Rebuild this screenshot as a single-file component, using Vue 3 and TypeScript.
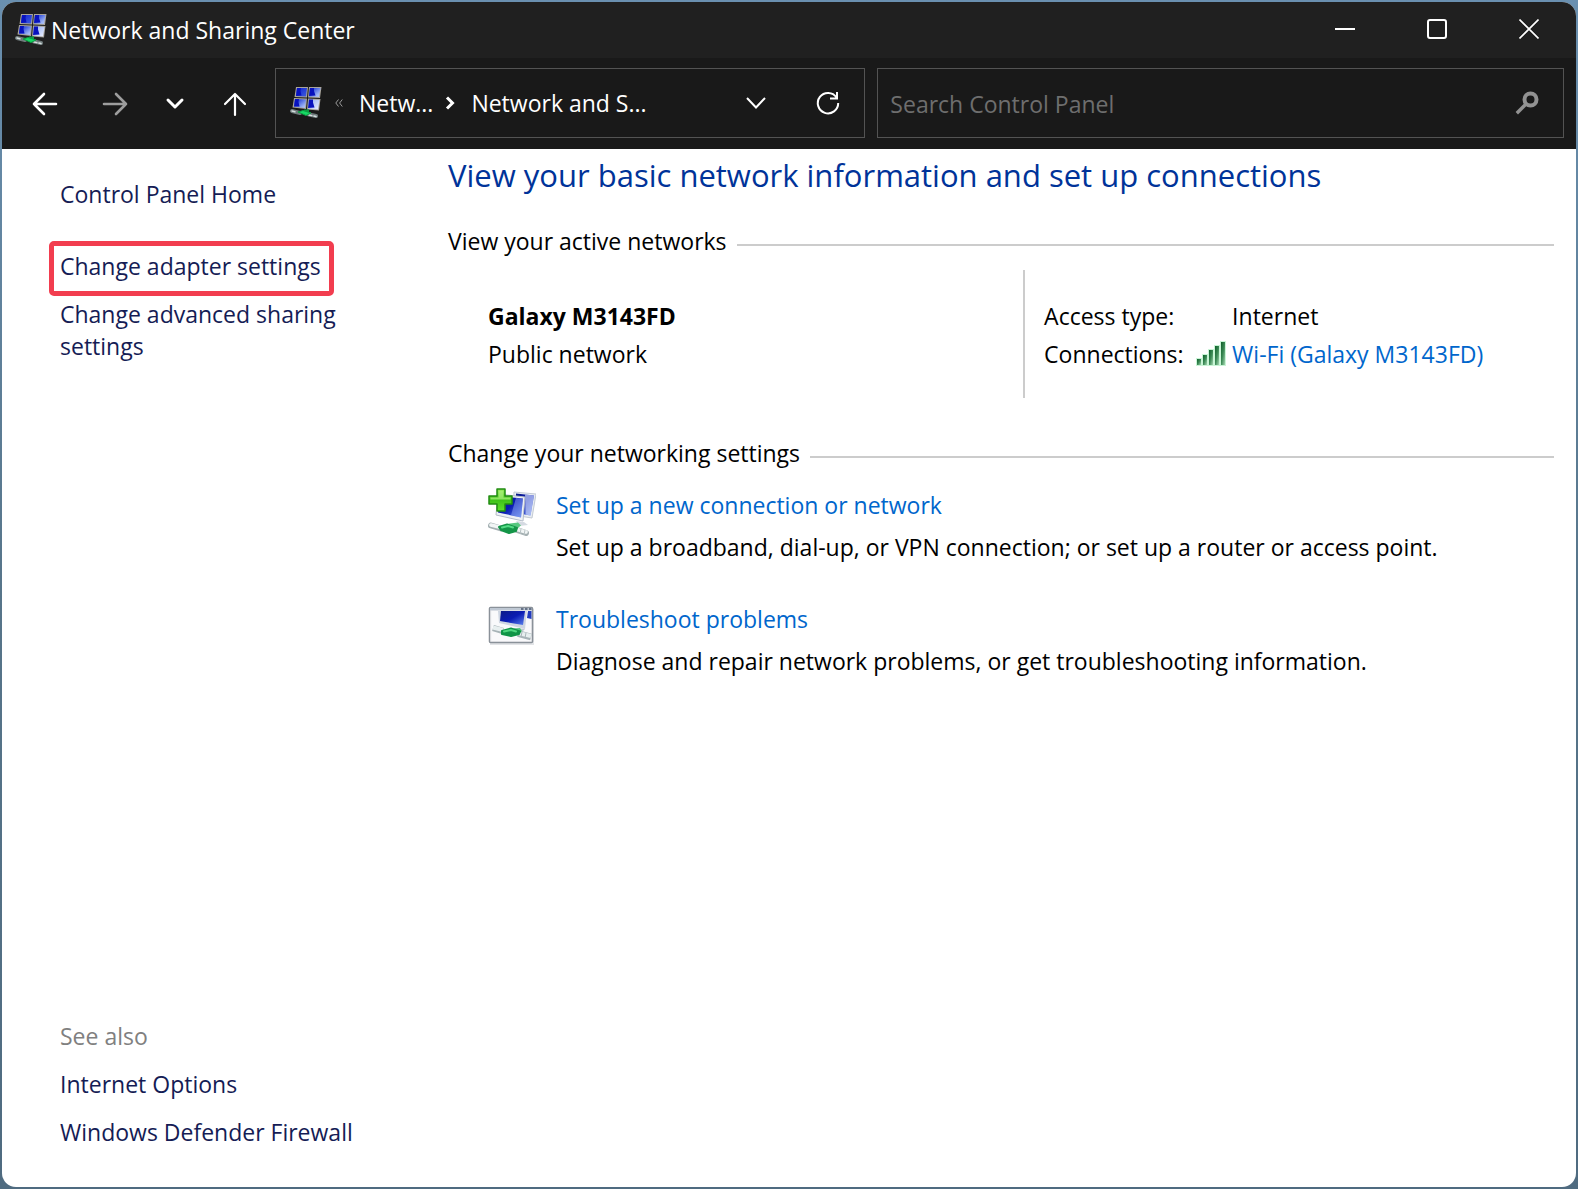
<script setup lang="ts">
import { ref } from 'vue'

interface Task {
  id: string
  title: string
  description: string
}

const search = ref('')

const tasks: Task[] = [
  {
    id: 'setup',
    title: 'Set up a new connection or network',
    description: 'Set up a broadband, dial-up, or VPN connection; or set up a router or access point.',
  },
  {
    id: 'troubleshoot',
    title: 'Troubleshoot problems',
    description: 'Diagnose and repair network problems, or get troubleshooting information.',
  },
]
</script>

<template>
  <div class="desktop">
    <svg class="defs" aria-hidden="true">
      <defs>
        <linearGradient id="screen" x1="0" y1="0" x2="1" y2="1">
          <stop offset="0" stop-color="#0a1fd0" />
          <stop offset="0.4" stop-color="#3a55dc" />
          <stop offset="0.6" stop-color="#9db4f4" />
          <stop offset="1" stop-color="#f2f6ff" />
        </linearGradient>
        <linearGradient id="deep" x1="0" y1="0" x2="1" y2="1">
          <stop offset="0" stop-color="#0c1a86" />
          <stop offset="0.5" stop-color="#0a1cb4" />
          <stop offset="1" stop-color="#5d83ee" />
        </linearGradient>
        <linearGradient id="plus" x1="0" y1="0" x2="0" y2="1">
          <stop offset="0" stop-color="#8be84a" />
          <stop offset="0.5" stop-color="#3fc21a" />
          <stop offset="1" stop-color="#5fe02c" />
        </linearGradient>
        <linearGradient id="bar" x1="0" y1="0" x2="1" y2="1">
          <stop offset="0" stop-color="#0f5f2a" />
          <stop offset="0.5" stop-color="#3b8a55" />
          <stop offset="1" stop-color="#a5d6b2" />
        </linearGradient>
        <symbol id="network" viewBox="0 0 32 32">
          <path d="M6 0h12l-1 10.500L4.500 10zM19 0h12.500l-1.500 11-12-.5zM4 11l13 .5-1 10.500L2.500 20.500zM18 11.500l12.500.5-1.500 11.500-12-1z" fill="#a9a59c" />
          <path d="M7 1h10l-1 8.500L6 9zM20 1h10.500L29 10l-10-.5zM5 12l11 .5-1 8.500-11-1.500zM19 12.500l10.500.5-1.500 9.500-10-1z" fill="url(#screen)" />
          <path d="M7 1h4l-.5 3 1 4.500L6 9zM20 1h4l0 3 1.500 4.500-6.500.5zM5 12h4l-.5 3 1 4.500L4 19.500zM19 12.500h4l0 3 1.500 5-6.500.5z" fill="#0812bd" />
          <path d="M2 24l8 2M19 27.500l7 1.500" stroke="#6f7b7c" stroke-width="4" stroke-linecap="round" />
          <path d="M2 24l4 1M19 28l7 1.500" stroke="#d5dede" stroke-width="1.500" stroke-linecap="round" stroke-dasharray="3 2" />
          <path d="M14 22.500h5v3h-5z" fill="#0c9c42" />
          <path d="M8 25l5-1.500 8 2.500-5 2.500z" fill="#16d964" stroke="#0c9c42" />
        </symbol>
      </defs>
    </svg>

    <div class="window">
      <header class="titlebar">
        <svg class="app-icon"><use href="#network" /></svg>
        <span class="title">Network and Sharing Center</span>
        <div class="controls">
          <button type="button" aria-label="Minimize">
            <svg width="20" height="20" viewBox="0 0 20 20"><path d="M0 10h20" stroke="#fff" stroke-width="2" /></svg>
          </button>
          <button type="button" aria-label="Maximize">
            <svg width="20" height="20" viewBox="0 0 20 20"><rect x="1" y="1" width="18" height="18" rx="2" fill="none" stroke="#fff" stroke-width="2" /></svg>
          </button>
          <button type="button" aria-label="Close">
            <svg width="20" height="20" viewBox="0 0 20 20"><path d="M.5.5l19 19M19.500.5l-19 19" stroke="#fff" stroke-width="1.600" /></svg>
          </button>
        </div>
      </header>

      <nav class="toolbar" aria-label="Navigation">
        <div class="nav-buttons">
          <button type="button" class="back" aria-label="Back">
            <svg width="26" height="26" viewBox="0 0 26 26"><path d="M12 3L2 13l10 10M2 13h22" fill="none" stroke="#fff" stroke-width="2.600" stroke-linecap="round" stroke-linejoin="round" /></svg>
          </button>
          <button type="button" aria-label="Forward">
            <svg width="26" height="26" viewBox="0 0 26 26"><path d="M14 3l10 10-10 10M24 13H2" fill="none" stroke="#9d9d9d" stroke-width="2.600" stroke-linecap="round" stroke-linejoin="round" /></svg>
          </button>
          <button type="button" aria-label="Recent locations">
            <svg width="26" height="26" viewBox="0 0 26 26"><path d="M6 9l7 7 7-7" fill="none" stroke="#fff" stroke-width="3" stroke-linecap="round" stroke-linejoin="round" /></svg>
          </button>
          <button type="button" aria-label="Up">
            <svg width="26" height="26" viewBox="0 0 26 26"><path d="M3 13L13 3l10 10M13 3v21" fill="none" stroke="#fff" stroke-width="2.200" stroke-linecap="round" stroke-linejoin="round" /></svg>
          </button>
        </div>

        <div class="address">
          <svg class="app-icon"><use href="#network" /></svg>
          <svg class="overflow" width="8" height="8" viewBox="0 0 8 8"><path d="M3.500.5L.8 4l2.700 3.500M7.300.5L4.600 4l2.700 3.500" fill="none" stroke="#9a9a9a" /></svg>
          <a class="crumb" href="#">Netw...</a>
          <svg class="separator" width="10" height="14" viewBox="0 0 10 14"><path d="M2 1.500L7.500 7 2 12.500" fill="none" stroke="#fff" stroke-width="3" /></svg>
          <a class="crumb" href="#">Network and S...</a>
          <button type="button" class="history" aria-label="Previous locations">
            <svg width="22" height="14" viewBox="0 0 22 14"><path d="M2 2l9 9.500L20 2" fill="none" stroke="#fff" stroke-width="2" /></svg>
          </button>
          <button type="button" class="refresh" aria-label="Refresh">
            <svg width="26" height="26" viewBox="0 0 26 26"><path d="M21.500 7.500A10.200 10.200 0 1 0 23.200 13M22 2v6.500h-7" fill="none" stroke="#fff" stroke-width="2" /></svg>
          </button>
        </div>

        <form class="search" role="search" @submit.prevent>
          <input v-model="search" type="text" placeholder="Search Control Panel" aria-label="Search Control Panel" />
          <button type="submit" aria-label="Search">
            <svg width="24" height="24" viewBox="0 0 24 24"><circle cx="15.500" cy="8.500" r="6" fill="none" stroke="#929292" stroke-width="4" /><path d="M11.500 12.500L1.800 22.200" stroke="#929292" stroke-width="3.400" /></svg>
          </button>
        </form>
      </nav>

      <div class="body">
        <aside class="sidebar">
          <nav class="side-links" aria-label="Tasks">
            <a class="home" href="#">Control Panel Home</a>
            <a class="highlighted" href="#">Change adapter settings</a>
            <a href="#">Change advanced sharing settings</a>
          </nav>
          <nav class="side-links" aria-label="See also">
            <span class="see-also">See also</span>
            <a href="#">Internet Options</a>
            <a href="#">Windows Defender Firewall</a>
          </nav>
        </aside>

        <main class="content">
          <h1>View your basic network information and set up connections</h1>

          <section>
            <h2>View your active networks</h2>
            <div class="network">
              <div class="network-name">
                <strong>Galaxy M3143FD</strong>
                <span>Public network</span>
              </div>
              <dl class="details">
                <dt>Access type:</dt>
                <dd class="plain">Internet</dd>
                <dt>Connections:</dt>
                <dd>
                  <svg class="signal" width="30" height="26" viewBox="0 0 30 26">
                    <path d="M0 17h6V25H0zM6 13h6V25H6zM12 8h6V25h-6zM18 4h6V25h-6zM24 0h6V25h-6z" fill="#c9f5d6" />
                    <g fill="url(#bar)">
                      <rect x="1" y="18" width="4" height="6" /><rect x="7" y="14" width="4" height="10" /><rect x="13" y="9" width="4" height="15" /><rect x="19" y="5" width="4" height="19" /><rect x="25" y="1" width="4" height="23" />
                    </g>
                  </svg>
                  <a href="#">Wi-Fi (Galaxy M3143FD)</a>
                </dd>
              </dl>
            </div>
          </section>

          <section>
            <h2>Change your networking settings</h2>
            <ul class="tasks">
              <li v-for="task in tasks" :key="task.id">
                <svg v-if="task.id === 'setup'" class="task-icon" viewBox="0 0 48 48">
                  <path d="M26 4l22 2-4 24-19-3z" fill="#e9edf2" stroke="#c3cad3" />
                  <path d="M28 5.500l18 2-3.500 20L28 25z" fill="url(#deep)" />
                  <path d="M37 6.500l9 1-3.500 20-5-1z" fill="#dbe6ff" opacity=".65" />
                  <path d="M10 6l27 3-2 24-27-6z" fill="#eef1f5" stroke="#b4bcc8" />
                  <path d="M11 8l24 2.500-2 19-23-5z" fill="url(#deep)" />
                  <path d="M28 10l7 .8-2 18.700-10-2.200z" fill="#a9c2ff" opacity=".4" />
                  <path d="M28 33l8 1 4 3-9 1z" fill="#d5dae2" />
                  <path d="M3 37.500l10 3M29 42l9 3" stroke="#a4b0b2" stroke-width="6" stroke-linecap="round" />
                  <path d="M3 37l10 2.500M29 41.500l9 2.500" stroke="#f1f5f5" stroke-width="3.600" stroke-linecap="round" />
                  <path d="M37 42l-1 5M33 41l-1 5" stroke="#b8c2c4" />
                  <path d="M19 36l11-1.500 3 3-5 4z" fill="#57c77f" />
                  <path d="M11 39l8-2.500 10 3.500-1 3-7 2-8-3z" fill="#159548" stroke="#159548" stroke-width="2" stroke-linejoin="round" />
                  <path d="M14 39.500l6-1.500 5 1.500" fill="none" stroke="#54dc85" stroke-width="2" stroke-linecap="round" />
                  <path d="M9 1h8v7h7v8h-7v7H9v-7H1V8h8z" fill="url(#plus)" stroke="#218c12" stroke-width="1.500" stroke-linejoin="round" />
                  <path d="M10.500 2.500h5v7h7v2H2.500v-2h8z" fill="#bdf690" opacity=".6" />
                </svg>
                <svg v-else class="task-icon" viewBox="0 0 48 48">
                  <path d="M2 7h44v36H2z" fill="#b6bbc2" opacity=".4" />
                  <rect x="1.500" y="5.500" width="43" height="35" rx="1" fill="#f4f5f7" stroke="#8a9199" stroke-width="1.500" />
                  <path d="M2 6h42v2.500H2z" fill="#bfc8d3" />
                  <path d="M33 7h2.500M37 7h2.500M41 7h2.500" stroke="#4b5871" stroke-width="1.500" />
                  <path d="M4 9h39v30H4z" fill="#f9f9fb" />
                  <path d="M10 9h29l-2 18-26-6z" fill="#cfd6e2" />
                  <path d="M13 9h24l-2 14-23-4z" fill="url(#deep)" />
                  <path d="M40 9h3.500v8l-4.500-1z" fill="#213bbd" />
                  <path d="M27 26l10 1-4 4-9-2z" fill="#c3cad3" />
                  <path d="M5 26l10 3M30 31.500l13 3.500" stroke="#a7b3b7" stroke-width="6.500" />
                  <path d="M5 25.500l10 2.500M30 31l13 3" stroke="#e8eff0" stroke-width="4" />
                  <path d="M38 31l-1 5M34 30l-1 5" stroke="#aab6ba" />
                  <path d="M22 27l10-1 2 3-5 4z" fill="#51c67b" />
                  <path d="M14 29l9-2.500 9 3-1 2.500-8 2-9-2z" fill="#109447" stroke="#109447" stroke-width="2" stroke-linejoin="round" />
                  <path d="M16 29.500l7-1.500 5 1.500" fill="none" stroke="#4ed67f" stroke-width="2" stroke-linecap="round" />
                </svg>
                <div class="task-text">
                  <a href="#">{{ task.title }}</a>
                  <p>{{ task.description }}</p>
                </div>
              </li>
            </ul>
          </section>
        </main>
      </div>
    </div>
  </div>
</template>

<style>
body {
  margin: 0;
}
</style>

<style scoped>
.desktop {
  box-sizing: border-box;
  min-height: 100vh;
  padding: 2px;
  display: flex;
  background: linear-gradient(#6a90b0, #57758a 50%, #4f6b80);
  font-family: "Open Sans", "Noto Sans", sans-serif;
  font-size: 23px;
  line-height: 32px;
  color: #000;
}

.defs {
  position: absolute;
  width: 0;
  height: 0;
}

.window {
  flex: 1;
  min-width: 0;
  display: flex;
  flex-direction: column;
  border-radius: 14px;
  overflow: hidden;
  background: #fff;
}

a {
  color: #0066cc;
  text-decoration: none;
}

button {
  padding: 0;
  border: 0;
  background: none;
  display: flex;
  align-items: center;
  justify-content: center;
}

svg {
  flex: none;
}

.app-icon {
  width: 32px;
  height: 32px;
}

.titlebar {
  height: 56px;
  display: flex;
  align-items: center;
  padding-left: 13px;
  background: #202020;
  color: #fff;
}

.title {
  margin-left: 4px;
  white-space: nowrap;
}

.controls {
  display: flex;
  align-self: stretch;
  margin-left: auto;
  padding: 0 1px 2px 0;
}

.controls button {
  width: 92px;
}

.toolbar {
  display: flex;
  align-items: center;
  padding: 10px 12px 11px 13px;
  background: #191919;
  color: #fff;
}

.nav-buttons {
  display: flex;
  margin-right: 10px;
  padding-top: 2px;
}

.nav-buttons button {
  width: 60px;
  height: 60px;
}

.nav-buttons .back {
  margin-right: 10px;
}

.address,
.search {
  box-sizing: border-box;
  height: 70px;
  min-width: 0;
  display: flex;
  align-items: center;
  border: 1px solid #535353;
}

.address {
  flex: 593;
  padding: 0 12px 0 14px;
}

.search {
  flex: 684;
  margin-left: 12px;
  padding: 0 24px 0 12px;
}

.overflow {
  margin: 0 16px 0 13px;
}

.crumb {
  color: #fff;
  white-space: nowrap;
}

.separator {
  margin: 0 16px 0 12px;
}

.history {
  width: 48px;
  height: 48px;
  margin-left: auto;
}

.refresh {
  width: 48px;
  height: 48px;
  margin-left: 24px;
}

.search input {
  flex: 1;
  min-width: 0;
  padding: 2px 0 0;
  border: 0;
  outline: 0;
  background: none;
  font: inherit;
  color: #fff;
}

.search input::placeholder {
  color: #6e6e6e;
  opacity: 1;
}

.body {
  flex: 1;
  display: flex;
}

.sidebar {
  box-sizing: border-box;
  flex: none;
  width: 446px;
  padding: 29px 90px 39px 58px;
  display: flex;
  flex-direction: column;
  justify-content: space-between;
}

.side-links {
  display: flex;
  flex-direction: column;
  align-items: flex-start;
  gap: 16px;
}

.side-links a {
  color: #151c55;
}

.side-links .home {
  margin-bottom: 24px;
}

.highlighted {
  position: relative;
}

.highlighted::after {
  content: "";
  position: absolute;
  inset: -9px -13px -14px -11px;
  border: 5px solid #f23d4f;
  border-radius: 5px;
}

.see-also {
  color: #808080;
}

.content {
  flex: 1;
  min-width: 0;
  padding: 6px 22px 40px 0;
}

h1 {
  margin: 0 0 30px;
  font-size: 31px;
  line-height: 40px;
  font-weight: 400;
  color: #003399;
}

h2 {
  margin: 0;
  display: flex;
  align-items: center;
  gap: 10px;
  font-size: inherit;
  font-weight: 400;
}

h2::after {
  content: "";
  flex: 1;
  height: 2px;
  margin-top: 8px;
  background: #cccccc;
}

.network {
  display: flex;
  height: 128px;
  margin: 13px 0 39px;
}

.network-name {
  box-sizing: border-box;
  flex: none;
  width: 52%;
  display: flex;
  flex-direction: column;
  gap: 6px;
  padding: 30px 0 0 40px;
}

.details {
  box-sizing: border-box;
  flex: 1;
  margin: 0;
  padding: 30px 0 0 19px;
  display: grid;
  grid-template-columns: 152px 1fr;
  grid-auto-rows: 32px;
  row-gap: 6px;
  border-left: 2px solid #cccccc;
  white-space: nowrap;
}

dd {
  margin: 0;
  display: flex;
  align-items: center;
  gap: 6px;
}

dd.plain {
  padding-left: 36px;
}

.tasks {
  margin: 19px 0 0;
  padding: 0 0 0 40px;
  list-style: none;
  display: flex;
  flex-direction: column;
  gap: 39px;
}

.tasks li {
  display: flex;
  gap: 20px;
}

.task-icon {
  width: 48px;
  height: 48px;
}

.task-text {
  padding-top: 1px;
}

.task-text p {
  margin: 10px 0 0;
}
</style>
